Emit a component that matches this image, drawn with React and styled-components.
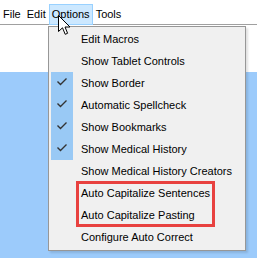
import React from "react";
import styled, { createGlobalStyle } from "styled-components";

const Global = createGlobalStyle`
  html, body { margin: 0; padding: 0; }
  body {
    width: 257px;
    height: 258px;
    overflow: hidden;
    font-family: "Liberation Sans", Arial, sans-serif;
    font-size: 11px;
    color: #000;
  }
  #root { height: 258px; }
`;

const Page = styled.div`
  position: relative;
  height: 258px;
  display: flex;
  flex-direction: column;
  background: #9ccbfb;
`;

const MenuBar = styled.div`
  height: 25px;
  box-sizing: border-box;
  padding-top: 4px;
  background: #fff;
  border-bottom: 1px solid #a0a0a0;
  display: flex;
  align-items: flex-start;
`;

const BarItem = styled.div`
  height: 21px;
  box-sizing: border-box;
  padding: 0 2px;
  border: 1px solid ${(p) => (p.$active ? "#99d1ff" : "transparent")};
  background: ${(p) => (p.$active ? "#cce8ff" : "transparent")};
  display: flex;
  align-items: center;
  line-height: 1;
`;

const ToolArea = styled.div`
  height: 47px;
  background: #fff;
`;

const Body = styled.div`
  flex: 1;
`;

const Dropdown = styled.div`
  position: absolute;
  left: 48px;
  top: 26px;
  width: 198px;
  box-sizing: border-box;
  background: #f0f0f0;
  border: 1px solid #979797;
  padding: 1px 2px 2px 1px;
  box-shadow: 2px 2px 2px rgba(0, 0, 0, 0.12);
`;

const Row = styled.div`
  height: 22px;
  display: flex;
  align-items: center;
  white-space: nowrap;
`;

const CheckCell = styled.div`
  width: 22px;
  height: 22px;
  margin-left: 1px;
  background: ${(p) => (p.$checked ? "#99c9f5" : "transparent")};
  display: flex;
  align-items: center;
  justify-content: center;
`;

const Label = styled.span`
  margin-left: 8px;
`;

const Group = styled.div`
  position: relative;
  &::after {
    content: "";
    position: absolute;
    left: 26px;
    top: -1px;
    bottom: -1px;
    width: 139px;
    box-sizing: border-box;
    border: 3px solid #e8413f;
    pointer-events: none;
  }
`;

const Cursor = styled.svg`
  position: absolute;
  left: 58px;
  top: 15px;
`;

const Check = () => (
  <svg width="22" height="22" viewBox="0 0 22 22">
    <path d="M6.5 9.5 L9.5 12.5 L15.5 6.5" fill="none" stroke="#333" strokeWidth="1.4" />
  </svg>
);

const items = [
  { label: "Edit Macros" },
  { label: "Show Tablet Controls" },
  { label: "Show Border", checked: true },
  { label: "Automatic Spellcheck", checked: true },
  { label: "Show Bookmarks", checked: true },
  { label: "Show Medical History", checked: true },
  { label: "Show Medical History Creators" },
];

const grouped = [
  { label: "Auto Capitalize Sentences" },
  { label: "Auto Capitalize Pasting" },
];

const MenuRow = ({ label, checked }) => (
  <Row>
    <CheckCell $checked={checked}>{checked && <Check />}</CheckCell>
    <Label>{label}</Label>
  </Row>
);

export default function App() {
  return (
    <>
      <Global />
      <Page>
        <MenuBar>
          <BarItem>File</BarItem>
          <BarItem>Edit</BarItem>
          <BarItem $active>Options</BarItem>
          <BarItem>Tools</BarItem>
        </MenuBar>
        <ToolArea />
        <Body />
        <Dropdown>
          {items.map((it) => (
            <MenuRow key={it.label} {...it} />
          ))}
          <Group>
            {grouped.map((it) => (
              <MenuRow key={it.label} {...it} />
            ))}
          </Group>
          <MenuRow label="Configure Auto Correct" />
        </Dropdown>
        <Cursor width="13" height="21" viewBox="0 0 13 21">
          <path
            d="M0.5 0.5 L0.5 16.5 L4.5 12.8 L7.2 19.3 L9.6 18.3 L7 12 L12 12 Z"
            fill="#fff"
            stroke="#000"
            strokeWidth="1"
            strokeLinejoin="miter"
          />
        </Cursor>
      </Page>
    </>
  );
}
